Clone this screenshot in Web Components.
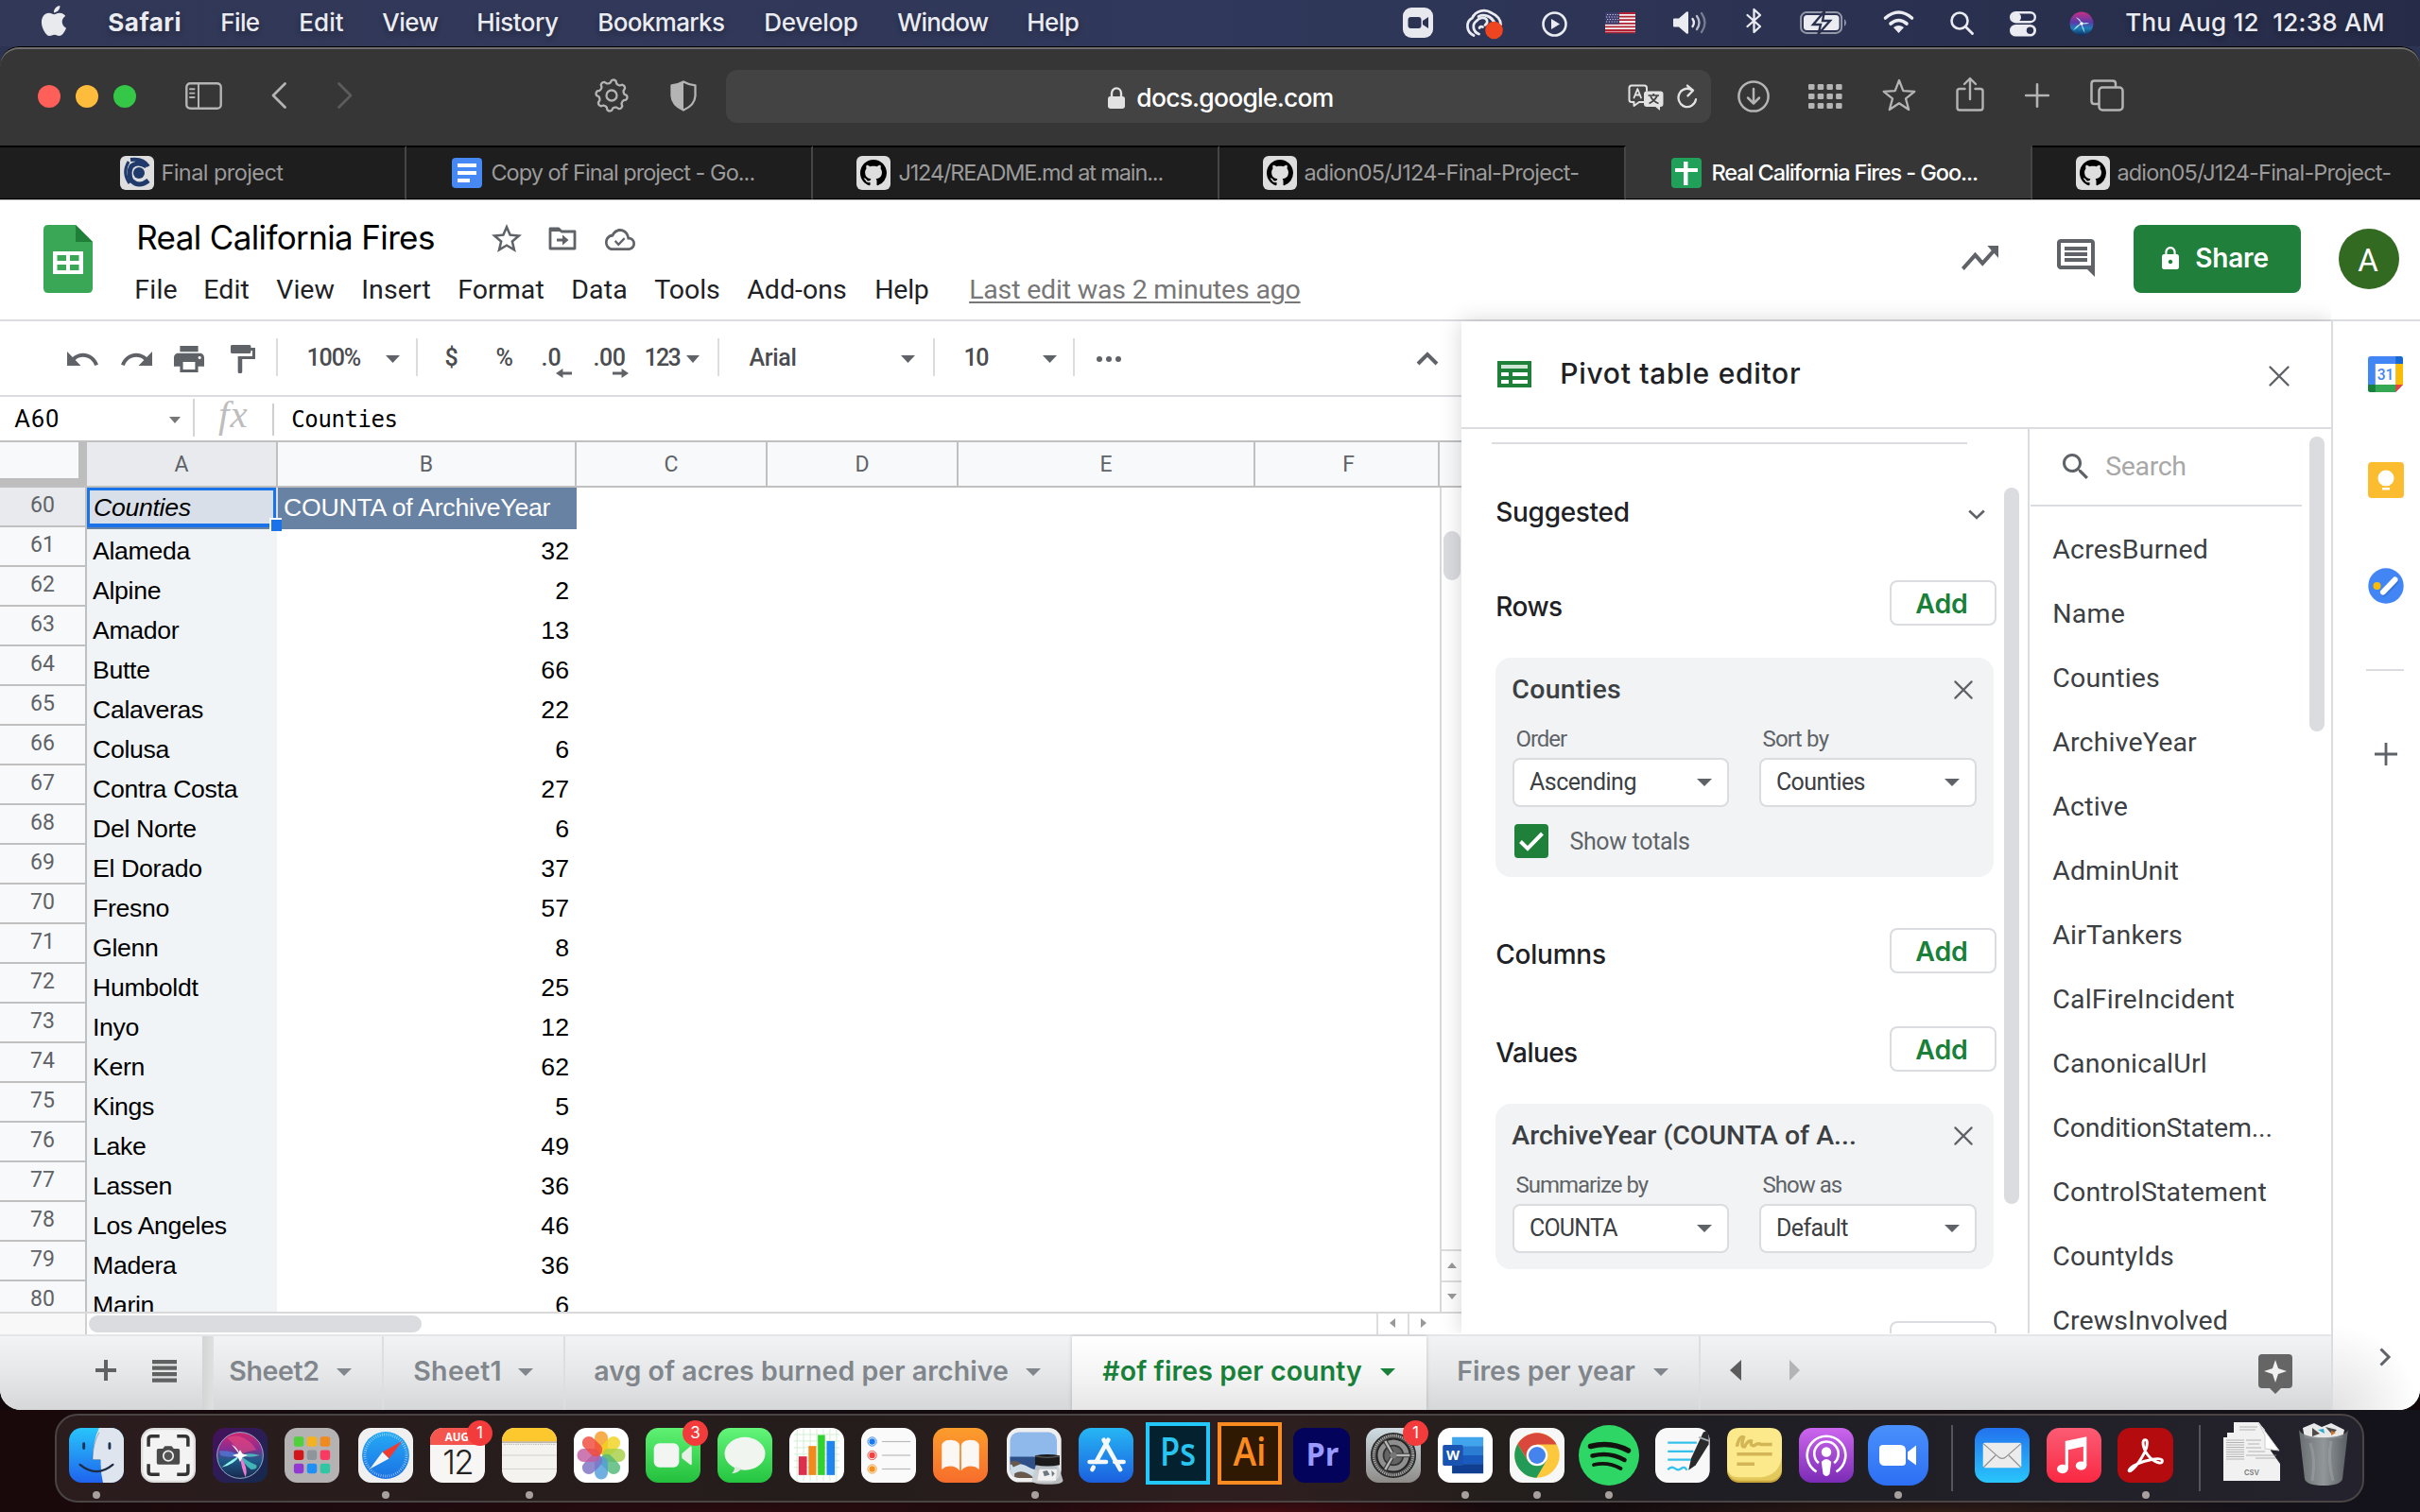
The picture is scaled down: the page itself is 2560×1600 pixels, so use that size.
<!DOCTYPE html>
<html lang="en">
<head>
<meta charset="utf-8">
<title>Real California Fires - Google Sheets</title>
<style>
html,body{margin:0;padding:0}
body{width:2560px;height:1600px;overflow:hidden;font-family:Roboto,"Liberation Sans",sans-serif;background:#0b0809}
</style>
</head>
<body>
<mac-desktop></mac-desktop>
<script>
/* ---------- helpers ---------- */
const FONTS={
  r:['Roboto,sans-serif',.3415],
  i:['Inter,sans-serif',.3635],
  a:['"Liberation Sans",sans-serif',.3465],
  m:['"DejaVu Sans Mono",monospace',.346],
  s:['"Liberation Serif",serif',.337]
};
const BASE=`*{box-sizing:border-box}:host{display:block}.row{display:flex;align-items:flex-start;overflow:visible}.row>*{flex:none}svg{display:block;overflow:visible}`;
// text item: left ink edge, baseline, ink width
const T=(x,y,w,text,size,o={})=>{
  const f=o.f||'r',[fam,k]=FONTS[f],lh=Math.round(size*1.25),p=size*.025;
  return{x:x-p,y:y-lh/2-k*size,w:w+size*.055,h:`<fit-text w="${(w+size*.055).toFixed(2)}" style="font:${o.st||''} ${o.wt||400} ${size}px/${lh}px ${fam.replace(/"/g,"'")};color:${o.c||'inherit'};${o.css||''}">${text}</fit-text>`};
};
const I=(x,y,w,h,name,c)=>({x,y,w,h:`<ui-icon name="${name}" style="width:${w}px;height:${h}px;color:${c||'inherit'}"></ui-icon>`});
const B=(x,y,w,h,css,inner='')=>({x,y,w,h:`<div style="width:${w}px;height:${h}px;${css}">${inner}</div>`});
function row(top,height,items,css='',left=0){
  let cur=left;
  return `<div class="row" style="height:${height}px;${css}">`+items.map(t=>{
    const m=t.x-cur;cur=t.x+t.w;
    return `<div style="width:${t.w}px;margin:${t.y-top}px 0 0 ${m}px">${t.h}</div>`;
  }).join('')+`</div>`;
}
function define(name,css,html){
  customElements.define(name,class extends HTMLElement{
    connectedCallback(){
      if(this.shadowRoot)return;
      const r=this.attachShadow({mode:'open'});
      r.innerHTML=`<style>${BASE}${css}</style>`+(typeof html==='function'?html(this):html);
    }
  });
}

/* ---------- fit-text: spreads letter spacing to fill a given width ---------- */
customElements.define('fit-text',class extends HTMLElement{
  connectedCallback(){
    if(this.shadowRoot)return;
    const r=this.attachShadow({mode:'open'});
    r.innerHTML=`<style>:host{display:block;white-space:pre}</style><span><slot></slot></span>`;
    const s=r.querySelector('span'),w=+this.getAttribute('w'),n=[...this.textContent].length;
    const nat=s.getBoundingClientRect().width;
    this.style.width=w+'px';
    if(n>1&&nat)s.style.letterSpacing=((w-nat)/(n-.5)).toFixed(3)+'px';
  }
});

/* ---------- icons ---------- */
const S=(d,w=2,x='')=>`<path d="${d}" fill="none" stroke="currentColor" stroke-width="${w}" stroke-linecap="round" stroke-linejoin="round" ${x}/>`;
const F=d=>`<path fill="currentColor" d="${d}"/>`;
const RR=(fill,x='')=>`<rect width="100" height="100" rx="23" fill="${fill}" ${x}/>`;
const LG=(id,a,b,c)=>`<linearGradient id="${id}" x1="0" y1="0" x2="0" y2="1"><stop offset="0" stop-color="${a}"/>${c?`<stop offset=".5" stop-color="${c}"/>`:''}<stop offset="1" stop-color="${b}"/></linearGradient>`;
const gear=(()=>{let d='';for(let i=0;i<64;i++){const a=i*Math.PI/32,p=i%8,r=(p<4)?16.6:13.2;const q=p===0||p===3?16:p===4||p===7?13.6:r;d+=(i?'L':'M')+(18+q*Math.cos(a)).toFixed(1)+' '+(18+q*Math.sin(a)).toFixed(1);}return d+'Z';})();
const ICONS={
 apple:['0 0 24 24',F('M12.152 6.896c-.948 0-2.415-1.078-3.96-1.04-2.04.027-3.91 1.183-4.961 3.014-2.117 3.675-.546 9.103 1.519 12.09 1.013 1.454 2.208 3.09 3.792 3.039 1.52-.065 2.09-.987 3.935-.987 1.831 0 2.35.987 3.96.948 1.637-.026 2.676-1.48 3.676-2.948 1.156-1.688 1.636-3.325 1.662-3.415-.039-.013-3.182-1.221-3.22-4.857-.026-3.04 2.48-4.494 2.597-4.559-1.429-2.09-3.623-2.324-4.39-2.376-2-.156-3.675 1.09-4.61 1.09zM15.53 3.83c.843-1.012 1.4-2.427 1.245-3.83-1.207.052-2.662.805-3.532 1.818-.78.896-1.454 2.338-1.273 3.714 1.338.104 2.715-.688 3.559-1.701')],
 zoomm:['0 0 32 32','<rect width="32" height="32" rx="9" fill="#e8e9ee"/><rect x="5.5" y="10" width="14" height="12" rx="3" fill="#2c3252"/><path d="M21 14l6-4v12l-6-4z" fill="#2c3252"/>'],
 cc:['0 0 40 32',S('M9 28.5C1 25 0 14 7.5 10C11 2 21 0 27.5 4.500C33 7 37.500 10 37.500 17',2.8)+S('M14.500 27C8 24.500 7 17 11.500 13.500C15 9.500 20 9 22 11C24.500 13.500 23 16 21 17.500',2.800)+S('M14 8.500C20 5.500 27 8 30.500 14M15 20.500Q16 18.500 18.500 19.500',2.800)+'<circle cx="30.500" cy="23" r="9.300" fill="#ee4420"/>'],
 playc:['0 0 27 27','<circle cx="13.5" cy="13.5" r="12" fill="none" stroke="currentColor" stroke-width="2.6"/>'+F('M10 8l9 5.5-9 5.5z')],
 flag:['0 0 32 22','<rect width="32" height="22" fill="#f4f4f4"/><path d="M0 1h32M0 4.6h32M0 8.2h32M0 11.8h32M0 15.4h32M0 19h32M0 21.4h32" stroke="#b22234" stroke-width="1.8"/><rect width="15" height="12.6" fill="#3c3b6e"/><path d="M2 2.5h12M1 5h13M2 7.5h12M1 10h13" stroke="#cfd0e4" stroke-width="1" stroke-dasharray="1.2 1.6"/>'],
 vol:['0 0 37 26',F('M1 8.5h5L14 1.6q2-1 2 1v20.8q0 2-2 1L6 17.500H1q-1 0-1-1v-7q0-1 1-1z')+S('M20.500 9q2.800 4 0 8',2.3)+S('M25 6q5 7 0 14',2.3,'opacity=".75"')+S('M30 3q7 10 0 20',2.3,'opacity=".4"')],
 bt:['0 0 18 28',S('M1.500 8L15 20L8.500 26V2L15 8L1.500 20',2.3)],
 batt:['0 0 51 24','<rect x="1.100" y="1.100" width="43" height="21.800" rx="6" fill="none" stroke="currentColor" stroke-width="2" opacity=".55"/><path d="M47 8q4 4 0 8z" fill="currentColor" opacity=".55"/><rect x="4" y="4" width="37.500" height="16" rx="3.500" fill="currentColor"/><path d="M26 0L14 14H22L19.500 24L32 10H24Z" fill="currentColor" stroke="#2a304e" stroke-width="2.4"/>'],
 wifi:['0 0 33 24',S('M2.500 8Q16.500 -4 30.500 8',3.6)+S('M8 14Q16.500 7 25 14',3.600)+F('M11 18q5.500-4 11 0L16.500 24z')],
 mag:['0 0 25 25','<circle cx="10" cy="10" r="8.500" fill="none" stroke="currentColor" stroke-width="2.600"/>'+S('M16.500 16.500L23.500 23.500',2.900)],
 cctl:['0 0 28 27','<rect x="1.200" y="1.200" width="25.600" height="10" rx="5" fill="none" stroke="currentColor" stroke-width="2.400"/><circle cx="7" cy="6.200" r="5" fill="currentColor"/><rect y="14" width="28" height="12.600" rx="6.300" fill="currentColor"/><circle cx="21.500" cy="20.300" r="3.700" fill="#2a304e"/>'],
 siri:['0 0 100 100','<defs><linearGradient id="g" x1="0" y1="0" x2="0" y2="1"><stop offset="0" stop-color="#c72f86"/><stop offset=".45" stop-color="#5a3aa8"/><stop offset=".7" stop-color="#1d7fb8"/><stop offset="1" stop-color="#102a5c"/></linearGradient></defs><circle cx="50" cy="50" r="48" fill="url(#g)"/><path d="M50 50Q38 34 26 24Q48 30 50 50Q66 44 82 48Q66 54 50 50Q60 70 64 88Q50 70 50 50Q34 66 16 78Q30 54 50 50" fill="#b5f6f7" opacity=".9"/><circle cx="50" cy="50" r="7" fill="#fff"/>'],
 side:['0 0 39 30','<rect x="1.300" y="1.300" width="36.400" height="27.400" rx="4" fill="none" stroke="currentColor" stroke-width="2.400"/>'+S('M14 1.500V28.500M5 7.500H9.500M5 12H9.500M5 16.500H9.500',2)],
 back:['0 0 16 28',S('M14.500 1.500L2 14L14.500 26.500',2.800)],
 fwd:['0 0 16 28',S('M1.500 1.500L14 14L1.500 26.500',2.800)],
 gear:['0 0 36 36',S(gear,2.3)+'<circle cx="18" cy="18" r="5.500" fill="none" stroke="currentColor" stroke-width="2.300"/>'],
 shield:['0 0 28 34',S('M14 1.500Q20 5 26.500 5.500V17Q26 27 14 32.500Q2 27 1.500 17V5.500Q8 5 14 1.500Z',2.3)+F('M14 1.500V32.500Q2 27 1.500 17V5.500Q8 5 14 1.500z')],
 lockm:['0 0 18 24','<rect y="10.500" width="18" height="13.500" rx="2.500" fill="currentColor"/>'+S('M4 11V7a5 5.500 0 0 1 10 0V11',2.400)],
 trans:['0 0 38 28',S('M17 19L12 19L6.500 23V19H4Q1.500 19 1.500 16.500V4Q1.500 1.500 4 1.500H17.500Q20 1.500 20 4V7',2)+S('M6.500 14.500L10.300 5L14 14.500M8 11.500H12.500',1.8)+'<rect x="17" y="7.500" width="20.500" height="16.500" rx="3" fill="currentColor"/><path d="M28 23h6v5z" fill="currentColor"/><path d="M21.500 12H33M27.300 10V12M31 12.500Q28 18 22.500 20.500M24 13Q27 18.500 32.500 20.500" fill="none" stroke="#434343" stroke-width="1.700"/>'],
 reload:['0 0 22 26',S('M16.500 6.500A9.300 9.300 0 1 0 20 15.500M11 1.500L17 6.500L11.500 12',2.3)],
 dl:['0 0 34 34','<circle cx="17" cy="17" r="15.600" fill="none" stroke="currentColor" stroke-width="2.500"/>'+S('M17 9V24M11 18.500L17 24.500L23 18.500',2.500)],
 grid:['0 0 36 26',[0,10,20].map(y=>[0,9.700,19.400,29.100].map(x=>`<rect x="${x}" y="${y}" width="6.500" height="6" rx="1.300" fill="currentColor"/>`).join('')).join('')],
 star5:['0 0 36 35',S('M18 2L22.300 13.200L34.300 13.800L25 21.400L28.200 33L18 26.300L7.800 33L11 21.400L1.700 13.800L13.700 13.200Z',2.300)],
 share:['0 0 30 37',S('M9.500 13H4Q1.500 13 1.500 15.500V33Q1.500 35.500 4 35.500H26Q28.500 35.500 28.500 33V15.500Q28.500 13 26 13H20.500M15 24V2M9 8L15 2L21 8',2.400)],
 plusm:['0 0 26 26',S('M13 1.200V24.800M1.200 13H24.800',2.600)],
 tabs:['0 0 36 34',S('M9 26H4.500Q1.500 26 1.500 23V4.500Q1.500 1.500 4.500 1.500H24Q27 1.500 27 4.500V8',2.500)+'<rect x="9.500" y="8.500" width="25" height="24" rx="3.500" fill="none" stroke="currentColor" stroke-width="2.500"/>'],
 gh:['0 0 36 36','<rect width="36" height="36" rx="6" fill="#dedede"/><g transform="translate(4 4) scale(1.750)"><path fill="#000" d="M8 0C3.580 0 0 3.580 0 8c0 3.540 2.290 6.530 5.470 7.590.4.07.55-.17.55-.38 0-.19-.01-.82-.01-1.490-2.010.37-2.530-.49-2.690-.94-.09-.23-.48-.94-.82-1.130-.28-.15-.68-.52-.01-.53.63-.01 1.080.58 1.230.82.72 1.210 1.870.87 2.330.66.07-.52.28-.87.51-1.070-1.780-.2-3.640-.89-3.640-3.950 0-.87.31-1.590.82-2.150-.08-.2-.36-1.020.08-2.120 0 0 .67-.21 2.200.82.64-.18 1.320-.27 2-.27s1.360.09 2 .27c1.530-1.040 2.200-.82 2.200-.82.44 1.100.16 1.920.08 2.120.51.56.82 1.270.82 2.150 0 3.070-1.870 3.750-3.650 3.950.29.25.54.73.54 1.480 0 1.070-.01 1.930-.01 2.200 0 .21.15.46.55.38A8.010 8.010 0 0016 8c0-4.420-3.580-8-8-8z"/></g>'],
 bc:['0 0 36 36','<rect width="36" height="36" rx="6" fill="#dedede"/><g fill="none" stroke="#1f3a6b" stroke-width="5"><path d="M9 6Q2 18 10 29" stroke-width="3"/><path d="M11 4Q24 2 30 11" stroke-width="4"/><path d="M28 11Q19 5 12 11Q8 18 12 26Q20 34 30 26"/></g><circle cx="20" cy="18" r="6" fill="#1f3a6b"/>'],
 gdoc:['0 0 32 32','<rect width="32" height="32" rx="4" fill="#4688f4"/><path d="M6 6h20v4H6zM6 14h20v4H6zM6 22h13v4H6z" fill="#fff"/>'],
 gsht:['0 0 32 32','<rect width="32" height="32" rx="4" fill="#21a05a"/><path d="M13 4h4.500v7H28v4H17.500v14H13V15H4v-4h9z" fill="#fff"/>'],
 sheets:['0 0 52 72','<path d="M5 0H34L52 18V67Q52 72 47 72H5Q0 72 0 67V5Q0 0 5 0Z" fill="#3aa757"/><path d="M34 0L52 18H34Z" fill="#1f7e38"/><path fill="#fff" fill-rule="evenodd" d="M10 28H42V52H10ZM14.500 32V38H24V32ZM28 32V38H37.500V32ZM14.500 42V48H24V42ZM28 42V48H37.500V42Z"/>'],
 star:['2 2 20 19',F('M22 9.240l-7.190-.62L12 2 9.190 8.630 2 9.240l5.460 4.730L5.820 21 12 17.270 18.180 21l-1.630-7.030L22 9.240zM12 15.400l-3.760 2.270 1-4.280-3.320-2.880 4.380-.38L12 6.100l1.710 4.040 4.380.38-3.320 2.880 1 4.280L12 15.400z')],
 fold:['0 0 30 25','<path d="M2 2H11L14 5H28V23H2Z" fill="none" stroke="currentColor" stroke-width="2.800" stroke-linejoin="round"/><path d="M2 1H11L14 5H2z" fill="currentColor"/>'+F('M9 12.500h6V8.500l6.500 5.500-6.500 5.500v-4H9z')],
 cloud:['0 4 24 16',F('M19.350 10.040C18.670 6.590 15.640 4 12 4 9.110 4 6.600 5.640 5.350 8.040 2.340 8.360 0 10.910 0 14c0 3.310 2.690 6 6 6h13c2.760 0 5-2.240 5-5 0-2.640-2.050-4.780-4.650-4.960zM19 18H6c-2.210 0-4-1.790-4-4 0-2.050 1.530-3.760 3.560-3.970l1.070-.11.5-.95C8.080 7.140 9.940 6 12 6c2.620 0 4.880 1.860 5.390 4.430l.3 1.500 1.530.11c1.560.1 2.780 1.410 2.780 2.960 0 1.650-1.350 3-3 3z')+'<path d="M8 13l2.700 2.700L15.500 11" fill="none" stroke="currentColor" stroke-width="1.700"/>'],
 trend:['2 6 20 12',F('M16 6l2.290 2.290-4.880 4.880-4-4L2 16.590 3.410 18l6-6 4 4 6.300-6.290L22 12V6z')],
 comm:['2 2 20 20',F('M21.990 4c0-1.100-.89-2-1.990-2H4c-1.100 0-2 .9-2 2v12c0 1.100.9 2 2 2h14l4 4-.01-18zM20 4v12H4V4h16zM6 12h12v2H6zm0-3h12v2H6zm0-3h12v2H6z')],
 lock:['4 1 16 21',F('M18 8h-1V6c0-2.760-2.240-5-5-5S7 3.240 7 6v2H6c-1.100 0-2 .9-2 2v10c0 1.100.9 2 2 2h12c1.100 0 2-.9 2-2V10c0-1.100-.9-2-2-2zm-6 9c-1.100 0-2-.9-2-2s.9-2 2-2 2 .9 2 2-.9 2-2 2zm3.100-9H8.900V6c0-1.710 1.390-3.100 3.100-3.100 1.710 0 3.100 1.390 3.100 3.100v2z')],
 undo:['2 7 20.500 9',F('M12.500 8c-2.650 0-5.050.99-6.900 2.600L2 7v9h9l-3.620-3.620c1.390-1.160 3.160-1.880 5.120-1.880 3.540 0 6.550 2.310 7.600 5.500l2.370-.78C21.080 11.030 17.150 8 12.500 8z')],
 redo:['1.500 7 20.500 9',F('M18.400 10.600C16.550 8.990 14.150 8 11.500 8c-4.650 0-8.580 3.030-9.960 7.220L3.900 16c1.050-3.190 4.050-5.500 7.600-5.500 1.950 0 3.730.72 5.120 1.880L13 16h9V7l-3.600 3.600z')],
 print:['2 3 20 18',F('M19 8H5c-1.660 0-3 1.340-3 3v6h4v4h12v-4h4v-6c0-1.660-1.340-3-3-3zm-3 11H8v-5h8v5zm3-7c-.55 0-1-.45-1-1s.45-1 1-1 1 .45 1 1-.45 1-1 1zm-1-9H6v4h12V3z')],
 paint:['4 2 17 20',F('M18 4V3c0-.55-.45-1-1-1H5c-.55 0-1 .45-1 1v4c0 .55.45 1 1 1h12c.55 0 1-.45 1-1V6h1v4H9v11c0 .55.45 1 1 1h1c.55 0 1-.45 1-1v-9h9V4h-3z')],
 dn:['0 0 16 8',F('M0 0h16L8 8z')],
 lf:['0 0 8 16',F('M8 0v16L0 8z')],
 rt:['0 0 8 16',F('M0 0v16L8 8z')],
 up:['0 0 16 8',F('M0 8h16L8 0z')],
 al:['0 0 16 10',F('M0 5L7 0V3.500H16V6.500H7V10z')],
 ar:['0 0 16 10',F('M16 5L9 0V3.500H0V6.500H9V10z')],
 dots:['0 0 26 6','<circle cx="3" cy="3" r="3" fill="currentColor"/><circle cx="13" cy="3" r="3" fill="currentColor"/><circle cx="23" cy="3" r="3" fill="currentColor"/>'],
 chu:['0 0 24 15','<path d="M2 13L12 3L22 13" fill="none" stroke="currentColor" stroke-width="4"/>'],
 chd:['0 0 18 11','<path d="M1.200 1.500L9 9L16.800 1.500" fill="none" stroke="currentColor" stroke-width="2.600"/>'],
 chr:['0 0 12 20','<path d="M1.500 1.500L10 10L1.500 18.500" fill="none" stroke="currentColor" stroke-width="3"/>'],
 piv:['0 0 36 28','<rect width="36" height="28" fill="#1e8039"/><path d="M4 4h28v4H4z" fill="#cfe6d5"/><path d="M4 12h8v4H4zM16 12h16v4H16zM4 20h8v4H4zM16 20h16v4H16z" fill="#fff"/>'],
 x:['0 0 22 22',S('M1.500 1.500L20.500 20.500M20.500 1.500L1.500 20.500',2.400)],
 search:['3 3 17.500 17.500',F('M15.500 14h-.79l-.28-.27C15.410 12.590 16 11.110 16 9.500 16 5.910 13.090 3 9.500 3S3 5.910 3 9.500 5.910 16 9.500 16c1.610 0 3.090-.59 4.230-1.570l.27.28v.79l5 4.990L20.490 19l-4.990-5zm-6 0C7.010 14 5 11.990 5 9.500S7.010 5 9.500 5 14 7.010 14 9.500 11.990 14 9.500 14z')],
 check:['0 0 36 36','<rect width="36" height="36" rx="4" fill="#1e8039"/><path d="M6.500 18.500L14 26L29.500 10" fill="none" stroke="#fff" stroke-width="4"/>'],
 list:['0 0 26 24',F('M0 0h26v4.300H0zM0 6.500h26v4.300H0zM0 13h26v4.300H0zM0 19.500h26v4.300H0z')],
 plus:['0 0 22 22','<path d="M11 0V22M0 11H22" stroke="currentColor" stroke-width="4"/>'],
 plust:['0 0 24 24','<path d="M12 0V24M0 12H24" stroke="currentColor" stroke-width="2.800"/>'],
 expl:['0 0 36 42','<path d="M4 0H32Q36 0 36 4V32Q36 36 32 36H24L18 42L12 36H4Q0 36 0 32V4Q0 0 4 0Z" fill="#656565"/><path d="M18 6L21 15L30 18L21 21L18 30L15 21L6 18L15 15Z" fill="#f1f1f1"/>'],
 cal:['0 0 38 38','<rect width="38" height="38" rx="3" fill="#4285f4"/><path d="M30 0h5q3 0 3 3v5h-8z" fill="#1967d2"/><path d="M30 8h8v22h-8z" fill="#fbbc04"/><path d="M8 30h22v8H8z" fill="#34a853"/><path d="M0 30h8v8H3q-3 0-3-3z" fill="#188038"/><path d="M38 30v8H30z" fill="#fff"/><path d="M30 38V30h8z" fill="#ea4335"/><path d="M8 8h22v22H8z" fill="#fff"/><text x="19" y="25" font-family="Roboto" font-weight="500" font-size="16" text-anchor="middle" fill="#4285f4">31</text>'],
 keep:['0 0 38 38','<rect width="38" height="38" rx="4" fill="#fbbc30"/><circle cx="19" cy="17" r="8.500" fill="#fff"/><path d="M15 20h8v5h-8zM15 27h8v2.500h-8z" fill="#fff"/>'],
 task:['0 0 38 38','<circle cx="19" cy="19" r="18.700" fill="#4285f4"/><circle cx="9.500" cy="19" r="4" fill="#fbbc04"/><path d="M16 25.500L28.500 12.500" stroke="#2a5db8" stroke-width="6" stroke-linecap="round" opacity=".35" transform="translate(1 2)"/><path d="M16 25.500L28.500 12.500" stroke="#fff" stroke-width="6" stroke-linecap="round"/>'],
 /* dock */
 finder:['0 0 100 100','<defs>'+LG('g','#28c5fb','#1f63ee')+'<clipPath id="c"><rect width="100" height="100" rx="23"/></clipPath></defs><g clip-path="url(#c)"><rect width="100" height="100" fill="url(#g)"/><path d="M55 0Q43 25 43 58H58Q57 80 62 100H100V0Z" fill="#dfe5ee"/></g><path d="M27 29V37M74 29V37" stroke="#1c3352" stroke-width="5" stroke-linecap="round"/><path d="M20 67Q50 92 80 67" fill="none" stroke="#1c2c44" stroke-width="4" stroke-linecap="round"/><path d="M55 8Q43 30 43 58H57" fill="none" stroke="#1c3352" stroke-width="1.500" opacity=".4"/>'],
 shot:['0 0 100 100',RR('#dcdcdc')+'<rect x="4" y="4" width="92" height="92" rx="19" fill="#f3f3f3"/><g fill="none" stroke="#333" stroke-width="6"><path d="M14 34V20Q14 15 20 15H34M66 15H80Q86 15 86 20V34M86 66V80Q86 85 80 85H66M34 85H20Q14 85 14 80V66"/></g><path d="M32 38H40L44 33H56L60 38H68Q71 38 71 41V64Q71 67 68 67H32Q29 67 29 64V41Q29 38 32 38Z" fill="#4a4a4a"/><circle cx="50" cy="51" r="9" fill="#555" stroke="#eee" stroke-width="3"/>'],
 siriapp:['0 0 100 100','<defs><linearGradient id="b" x1="0" y1="0" x2="1" y2="1"><stop offset="0" stop-color="#46105c"/><stop offset="1" stop-color="#122b4e"/></linearGradient><linearGradient id="g" x1="0" y1="0" x2="0" y2="1"><stop offset="0" stop-color="#d0286e"/><stop offset=".35" stop-color="#8a2c93"/><stop offset=".6" stop-color="#1e5a88"/><stop offset="1" stop-color="#19284e"/></linearGradient></defs>'+RR('url(#b)')+'<circle cx="50" cy="50" r="42" fill="url(#g)" stroke="#9ab6d2" stroke-width="1.600"/><path d="M50 48Q34 24 26 18Q58 6 80 40Q66 42 50 48Z" fill="#ea4a80" opacity=".6"/><path d="M12 42Q32 40 50 50Q30 56 14 50Z" fill="#4d7fe0" opacity=".7"/><path d="M50 50Q38 56 16 72Q38 68 50 50" fill="#8ff5ea"/><path d="M50 50Q66 44 86 50Q66 56 50 50Q64 62 80 68Q82 76 70 76Q56 66 50 50" fill="#4fd8cc" opacity=".75"/><path d="M50 50Q52 74 60 90Q66 74 50 50" fill="#f07ad0"/><path d="M50 50Q40 36 34 30Q46 36 50 50" fill="#fff"/><path d="M50 40L54 47L64 50L54 54L50 62L46 54L36 50L46 47Z" fill="#fff"/>'],
 lpad:['0 0 100 100',RR('#b4b2b3')+['#4fd13b','#f4b21e','#f18a1e','#d3151c','#8f969b','#fb3a62','#9238d3','#1d8ff5','#2fc6a3'].map((c,i)=>`<rect x="${17+(i%3)*24}" y="${16+Math.floor(i/3)*24.500}" width="18" height="18" rx="4" fill="${c}"/>`).join('')],
 safari:['0 0 100 100','<defs>'+LG('g','#25aaf5','#1b72e4')+'</defs>'+RR('#f0f0f0')+'<circle cx="50" cy="50" r="43" fill="url(#g)"/><circle cx="50" cy="50" r="38" fill="none" stroke="#e5f3ff" stroke-width="5" stroke-dasharray="1 2.980" opacity=".8"/><path d="M80 24L44 44L56 56Z" fill="#f03c30"/><path d="M21 75L44 44L56 56Z" fill="#f4f4f4"/>'],
 cale:['0 0 100 100','<defs><clipPath id="c"><rect width="100" height="100" rx="23"/></clipPath></defs><g clip-path="url(#c)"><rect width="100" height="100" fill="#f7f6f4"/><rect width="100" height="31" fill="#f4554d"/></g><text x="49" y="23.500" font-family="Open Sans" font-weight="700" font-size="20" text-anchor="middle" fill="#fff">AUG</text><text x="50" y="84" font-family="Inter" font-weight="300" font-size="60" letter-spacing="-3" text-anchor="middle" fill="#222">12</text>'],
 notes:['0 0 100 100','<defs><clipPath id="c"><rect width="100" height="100" rx="23"/></clipPath></defs><g clip-path="url(#c)"><rect width="100" height="100" fill="#f5f3f0"/><rect width="100" height="25" fill="#fdc72e"/></g><path d="M0 26H100" stroke="#a9a19a" stroke-width="2"/><path d="M3 30H98" stroke="#999" stroke-width="2" stroke-dasharray="1 2"/><path d="M0 50H100M0 75H100" stroke="#d0cdca" stroke-width="1.500"/>'],
 photos:['0 0 100 100',RR('#fff')+['#f59b23','#f0d31f','#a5cf45','#54b878','#4f9edb','#7d72c4','#c15da0','#f04a3a'].map((c,i)=>`<rect x="38" y="6" width="24" height="42" rx="12" fill="${c}" opacity=".82" transform="rotate(${i*45} 50 50)"/>`).join('')],
 ftime:['0 0 100 100','<defs>'+LG('g','#5ff173','#23c03c')+'</defs>'+RR('url(#g)')+'<rect x="15" y="28" width="46" height="44" rx="10" fill="#f2f5f2"/><path d="M66 47L81 34Q84 32 84 36V66Q84 69 81 67L66 55Z" fill="#e7efe7"/>'],
 msgs:['0 0 100 100','<defs>'+LG('g','#63f57a','#24c440')+'</defs>'+RR('url(#g)')+'<ellipse cx="50" cy="47" rx="37" ry="30" fill="#f0f5f0"/><path d="M31 70Q32 78 26 83Q38 82 44 74Z" fill="#dfe9df"/>'],
 nums:['0 0 100 100',RR('#fff')+'<path d="M8 12H92M8 24H92M8 36H92M8 48H92M8 60H92M8 72H92M14 2V98M26 2V98M38 2V98M50 2V98M62 2V98M74 2V98M86 2V98" stroke="#cdeccd" stroke-width="1.500"/><path d="M17 52h15v34H17z" fill="#dd2f4c"/><path d="M35 33h14v53H35z" fill="#f08a1d"/><path d="M52 13h13v73H52z" fill="#2fd32f"/><path d="M68 24h15v62H68z" fill="#1f86ef"/>'],
 rem:['0 0 100 100',RR('#fbfafa')+[['#1a78f2',25],['#f2413e',50],['#f5921e',75]].map(([c,y])=>`<circle cx="20" cy="${y}" r="8" fill="none" stroke="${c}" stroke-width="1.500"/><circle cx="20" cy="${y}" r="5.500" fill="${c}"/><path d="M38 ${y}H90" stroke="#b9b9bd" stroke-width="2"/>`).join('')],
 books:['0 0 100 100','<defs>'+LG('g','#fc9d2c','#f76d2c')+'</defs>'+RR('url(#g)')+'<path d="M16 31Q18 22 33 22Q47 23 48.500 32V78Q42 70 32 70Q22 70 16 76Z" fill="#fbf7f3"/><path d="M84 31Q82 22 67 22Q53 23 51.500 32V78Q58 70 68 70Q78 70 84 76Z" fill="#fbf7f3"/>'],
 prev:['0 0 104 106','<rect width="100" height="100" rx="23" fill="#efefef"/><defs><clipPath id="c"><rect x="6" y="8" width="86" height="84" rx="16"/></clipPath></defs><g clip-path="url(#c)"><rect width="100" height="60" fill="#8fb9ea"/><rect y="53" width="100" height="50" fill="#2d5188"/><path d="M0 70Q20 60 40 72T100 76V100H0Z" fill="#cfdde8"/><path d="M6 62Q20 58 26 66L12 72M14 84Q30 74 50 92H14" fill="#69584c"/></g><path d="M54 66L46 96Q46 104 76 104Q104 104 103 96L94 66Z" fill="#c9cdd0" opacity=".9"/><path d="M60 76L56 97H90L92 76" fill="#f1f1f1"/><path d="M66 80l8-2 5 8-10 3zM82 78l6 6-5 6" fill="#6d7880"/><path d="M52 51Q74 46 97 51V68Q74 73 52 68Z" fill="#1b1b1b"/><path d="M52 52Q74 57 97 52" fill="none" stroke="#5a5a5a" stroke-width="2"/>'],
 appst:['0 0 100 100','<defs>'+LG('g','#26b7f4','#1b5fdf')+'</defs>'+RR('url(#g)')+'<g stroke="#f6f9fc" stroke-width="8" stroke-linecap="round"><path d="M54 22L32 62M27 72L25 76M46 22L76 76M20 62H50M66 62H82"/></g>'],
 ps:['0 0 68 66','<rect x="2" y="2" width="64" height="62" fill="#03212e" stroke="#22c8f9" stroke-width="4"/><text x="34" y="46" font-family="Open Sans" font-weight="600" font-size="42" text-anchor="middle" textLength="38" lengthAdjust="spacingAndGlyphs" fill="#27c5ef">Ps</text>'],
 ai:['0 0 68 66','<rect x="2" y="2" width="64" height="62" fill="#301903" stroke="#fb8b20" stroke-width="4"/><text x="34" y="46" font-family="Open Sans" font-weight="600" font-size="42" text-anchor="middle" textLength="35" lengthAdjust="spacingAndGlyphs" fill="#fb8b20">Ai</text>'],
 pr:['0 0 60 58','<rect width="60" height="58" rx="12" fill="#03035c"/><text x="31" y="40" font-family="Open Sans" font-weight="700" font-size="34" text-anchor="middle" textLength="35" lengthAdjust="spacingAndGlyphs" fill="#9999ff">Pr</text>'],
 prefs:['0 0 100 100','<defs>'+LG('g','#cfdde3','#8d8b88')+'</defs>'+RR('url(#g)')+'<circle cx="50" cy="50" r="40" fill="#4a4a4a" stroke="#2b2b2b" stroke-width="3"/><circle cx="50" cy="50" r="36" fill="none" stroke="#a8a8a8" stroke-width="5" stroke-dasharray="2 1.770"/><circle cx="50" cy="50" r="30" fill="#8f8f8f" stroke="#222" stroke-width="3"/><circle cx="50" cy="50" r="18" fill="#646464" stroke="#333" stroke-width="3"/><path d="M50 50L80 50M50 50L35 24M50 50L35 76" stroke="#3a3a3a" stroke-width="8"/><path d="M50 50L80 50M50 50L35 24M50 50L35 76" stroke="#b9b9b9" stroke-width="4"/><circle cx="50" cy="50" r="6" fill="#777"/>'],
 word:['0 0 100 100',RR('#fff')+'<path d="M26 17h57v17H26z" fill="#41a5ee"/><path d="M26 33h57v17H26z" fill="#2b7cd3"/><path d="M26 50h57v17H26z" fill="#185abd"/><path d="M26 66h57v17H26z" fill="#103f91"/><rect x="9" y="31" width="37" height="38" rx="3" fill="#1a53b0"/><text x="27.500" y="59" font-family="Open Sans" font-weight="700" font-size="25" text-anchor="middle" fill="#fff">W</text>'],
 chrome:['0 0 100 100',RR('#f7f7f7')+'<circle cx="50" cy="50" r="41" fill="#fdc83c"/><path d="M14.500 29.500A41 41 0 0 1 85.500 30L50 30L33 60Z" fill="#d9483b"/><path d="M14.500 29.500A41 41 0 0 0 49 91L67 60L33 60Z" fill="#239a56"/><circle cx="50" cy="50" r="19.500" fill="#fff"/><circle cx="50" cy="50" r="15.500" fill="#4583ee"/>'],
 spot:['0 0 64 64','<circle cx="32" cy="32" r="32" fill="#2ed765"/><g fill="none" stroke="#14120f" stroke-linecap="round"><path d="M12.500 22.500Q34 17 52.500 27" stroke-width="5.500"/><path d="M14.500 32.500Q33 28 48.500 37" stroke-width="4.500"/><path d="M16 42Q31 38.500 44.500 46" stroke-width="3.800"/></g>'],
 tedit:['0 0 104 100',RR('#f8f8f8')+'<path d="M23 27H76M23 43H70M23 58H66" stroke="#35c1ec" stroke-width="4"/><path d="M23 76Q30 69 36 74T48 74T58 77" fill="none" stroke="#35c1ec" stroke-width="4"/><path d="M61 77L66 55L88 8Q100 0 98 30L74 68Z" fill="#2a2a2c"/><path d="M80 17L99 24" stroke="#a9adb0" stroke-width="3"/>'],
 stick:['0 0 100 100','<rect y="6" width="100" height="94" rx="22" fill="#c9a63c"/><rect y="3" width="100" height="93" rx="22" fill="#e3c85c"/><path d="M22 0H78Q100 0 100 22V52Q96 86 62 90H22Q0 90 0 68V22Q0 0 22 0Z" fill="#fbe98b"/><path d="M18 34Q22 14 30 17Q24 36 32 34Q38 22 44 24Q42 34 50 32Q56 27 62 30H82M18 48H82M18 66H50" fill="none" stroke="#d3b556" stroke-width="6"/>'],
 pod:['0 0 100 100','<defs>'+LG('g','#cd66ee','#7a2bb5')+'</defs>'+RR('url(#g)')+'<g fill="none" stroke="#fff" stroke-width="4.500"><path d="M32 80A35 35 0 1 1 68 80"/><path d="M36 64A22 22 0 1 1 64 64"/></g><circle cx="50" cy="44" r="9" fill="#fff"/><path d="M41 62Q50 52 59 62L56 84Q50 92 44 84Z" fill="#fff"/>'],
 zoom:['0 0 64 64','<defs>'+LG('g','#4a90fb','#2c6ff4')+'</defs><rect width="64" height="64" rx="20" fill="url(#g)"/><path d="M12 24.500Q12 21 16 21H34Q40 21 40 27V39.500Q40 43 36 43H18Q12 43 12 37Z" fill="#fff"/><path d="M42 28.500L51 21.500V42.500L42 36Z" fill="#fff"/>'],
 mail:['0 0 100 100','<defs>'+LG('g','#2272ee','#29c6fb')+'</defs>'+RR('url(#g)')+'<rect x="15" y="27" width="70" height="46" rx="3" fill="#ececec"/><path d="M16 29L42 52Q50 60 58 52L84 29M16 72L38 50M84 72L62 50" fill="none" stroke="#8f8f8f" stroke-width="2"/>'],
 music:['0 0 100 100','<defs>'+LG('g','#fb5c74','#fa2842')+'</defs>'+RR('url(#g)')+'<ellipse cx="29" cy="75" rx="10" ry="8" fill="#fff"/><ellipse cx="63" cy="69" rx="10" ry="8" fill="#fff"/><path d="M34 75V24L73 16V69H67V34L39.500 40V75Z" fill="#fff"/>'],
 acro:['0 0 100 100',RR('#b30b0e')+'<path d="M50 22C43 20 44 40 60 56C72 66 82 66 80 59C77 53 52 58 35 66C19 73 18 82 24 78C36 70 54 40 53 27Q53 22 50 22Z" fill="none" stroke="#fff" stroke-width="5"/>'],
 csv:['0 0 60 62','<path d="M11 0H37L44 8V22H50V30L60 44V62H0V16H4V11H11Z" fill="#f1f1f1"/><path d="M37 0L44 14V28L59 30Z" fill="#fff" stroke="#ccc"/><g stroke="#9a9a9a" stroke-width="1"><path d="M3 19H22M3 21.500H22M3 24H22M3 26.500H22M3 29H22M3 31.500H22M3 34H22M3 36.500H22M3 39H22M24 19H40M26 23H38M24 27H40M26 31H44M24 35H56M34 38H56M17 5H36M17 8H34" opacity=".7"/></g><text x="30" y="56" font-family="Inter" font-weight="600" font-size="7.500" text-anchor="middle" fill="#777">CSV</text>'],
 trash:['0 0 52 67','<defs><linearGradient id="g"><stop offset="0" stop-color="#6e7476"/><stop offset=".5" stop-color="#9aa0a2"/><stop offset="1" stop-color="#5b6164"/></linearGradient></defs><path d="M4 6L16 1L24 5L34 1L48 8L46 17H6Z" fill="#e9e9e9"/><path d="M14 6l8 6-8 3zM28 5l7 8 5-5z" fill="#504a48"/><path d="M20 8l6-1 1 5z" fill="#2ba8d0"/><path d="M34 9l5 2-5 3z" fill="#c9772b"/><path d="M0 8Q4 16 26 16Q48 16 52 8L46 60Q44 67 26 67Q8 67 6 60Z" fill="url(#g)" opacity=".93"/><path d="M12 22Q18 40 14 62M34 20Q30 40 36 62" stroke="#c4c9ca" stroke-width="3" opacity=".25" fill="none"/>']
};
customElements.define('ui-icon',class extends HTMLElement{
  connectedCallback(){
    if(this.shadowRoot)return;
    const [vb,b]=ICONS[this.getAttribute('name')];
    this.attachShadow({mode:'open'}).innerHTML=`<style>:host{display:block}svg{display:block;width:100%;height:100%;overflow:visible}</style><svg viewBox="${vb}" preserveAspectRatio="none">${b}</svg>`;
  }
});

/* ---------- macOS menu bar ---------- */
const mi=(x,w,t,wt=500)=>T(x,33,w,t,26,{f:'i',wt});
define('mac-menubar',`:host{height:49px;background:linear-gradient(90deg,#323857,#30385b 50%,#262c48);color:#ebecf1;text-shadow:0 3px 6px #0005}`,
 row(0,49,[I(41,6,32,32,'apple','#e9eaee'),mi(115,76,'Safari',700),mi(234,40,'File'),mi(317,46,'Edit'),mi(405,58,'View'),mi(505,85,'History'),mi(633,133,'Bookmarks'),mi(809,98,'Develop'),mi(950,95,'Window'),mi(1087,54,'Help'),
 I(1484,8,32,32,'zoomm'),I(1550,9,40,32,'cc'),I(1631,12,27,27,'playc'),I(1698,13,32,22,'flag'),I(1770,11,37,26,'vol'),I(1847,8,18,28,'bt'),I(1904,12,51,24,'batt'),I(1992,11,33,24,'wifi'),I(2063,12,25,25,'mag'),I(2126,12,28,27,'cctl'),I(2189,12,26,26,'siri'),mi(2249,273,'Thu Aug 12  12:38 AM')]));

/* ---------- Safari chrome ---------- */
const dot=(x,c)=>B(x,90,24,24,`border-radius:50%;background:${c}`);
define('safari-toolbar',`:host{height:105px;background:#363636;border-top:1px solid #000;border-radius:20px 20px 0 0;color:#b4b4b4;box-shadow:inset 0 2px 0 #6f6f6f}`,
 row(50,104,[dot(40,'#fe5f58'),dot(80,'#febc3c'),dot(120,'#34c748'),I(196,87,39,29,'side'),I(287,87,16,28,'back'),I(357,87,16,28,'fwd','#5c5c5c'),I(629,83,36,36,'gear'),I(709,85,28,33,'shield'),
 B(768,74,1042,56,'border-radius:12px;background:#434343;color:#e2e2e2',row(74,56,[I(1172,92,18,23,'lockm'),T(1203,113.5,207,'docs.google.com',26.5,{f:'i',wt:500,c:'#fff'}),I(1722,89,38,28,'trans'),I(1774,89,22,27,'reload')],'',768)),
 I(1838,85,34,34,'dl'),I(1913,89,36,26,'grid'),I(1991,83,36,35,'star5'),I(2069,81,30,37,'share'),I(2142,88,26,26,'plusm'),I(2211,84,36,34,'tabs')]));
const TABS=[[0,430,'bc',127,'Final project',171,128],[430,430,'gdoc',478,'Copy of Final project - Go...',520,278],[860,430,'gh',906,'J124/README.md at main...',951,279],[1290,430,'gh',1336,'adion05/J124-Final-Project-',1380,290],[1720,430,'gsht',1768,'Real California Fires - Goo...',1811,281],[2150,410,'gh',2196,'adion05/J124-Final-Project-',2240,289]];
define('safari-tabs',`:host{height:57px;display:flex}.t{flex:none;background:#1e1e1e;color:#9b9b9b;border-top:2px solid #000;border-bottom:1px solid #000;border-right:2px solid #464646;height:57px}.t.on{background:#363636;color:#fff;border-top-color:#363636}.t:last-child{border-right:0}`,
 TABS.map(([x,w,ic,ix,t,tx,tw],i)=>{const s=ic[0]==='g'&&ic!=='gh'?32:36;return `<div class="t ${i===4?'on':''}" style="width:${w}px">${row(156,50,[I(ix,183-s/2,s,s,ic),T(tx,191.5,tw,t,23.5,{f:'i',wt:i===4?500:400})],'',x)}</div>`}).join(''));

/* ---------- Sheets header ---------- */
const hm=(x,w,t)=>T(x,316.5,w,t,28.5);
define('sheets-header',`:host{height:129px;background:#fff;border-bottom:2px solid #dadce0;border-top:1px solid #bbb;color:#202124;display:flex}.l{width:2050px}.c{color:#5f6368}`,
 `<div class="l">`+row(212,71,[{...I(46,238,52,72,'sheets')},T(145,264,314,'Real California Fires',35,{f:'i',c:'#000'}),I(520,237,32,30,'star','#5f6368'),I(580,240,30,25,'fold','#5f6368'),I(640,242,32,23,'cloud','#5f6368')])
 +row(283,54,[hm(143,44,'File'),hm(216,47,'Edit'),hm(293,60,'View'),hm(383,72,'Insert'),hm(485,90,'Format'),hm(605,58,'Data'),hm(693,68,'Tools'),hm(791,104,'Add-ons'),hm(926,56,'Help'),T(1026,316.5,349,'Last edit was 2 minutes ago',28.5,{c:'#777',css:'text-decoration:underline;text-underline-offset:3px;text-decoration-thickness:2px'})])
 +`</div>`+row(212,125,[I(2075,260,39,26,'trend','#5f6368'),I(2176,253,40,40,'comm','#5f6368'),
 B(2257,238,177,72,'border-radius:8px;background:#20803b;color:#fff',row(238,72,[I(2287,261,18,24,'lock'),T(2323,284,76,'Share',28,{wt:600,f:'i'})],'',2257)),
 B(2474,242,64,64,'border-radius:50%;background:#336a22;color:#fff',row(242,64,[T(2495,287,22,'A',33)],'',2474))],'',2050));

/* ---------- toolbar, formula bar ---------- */
const G='#5f6368',sep=x=>B(x,358,2,40,'background:#dadce0'),tt=(x,w,t)=>T(x,387,w,t,25,{wt:500,c:'#4a4c50'});
const sub=(x,y,name)=>({x,y,w:0,h:`<ui-icon name="${name}" style="width:17px;height:10px;color:${G}"></ui-icon>`});
define('sheets-toolbar',`:host{height:80px;border-bottom:2px solid #dadce0;background:#fff}`,
 row(340,78,[I(71,372,33,15,'undo',G),I(128,372,33,15,'redo',G),I(184,366,32,28,'print',G),I(244,365,26,30,'paint',G),sep(292),tt(325,56,'100%'),I(408,376,15,8,'dn',G),sep(440),tt(471,14,'$'),tt(525,18,'%'),tt(573,20,'.0'),sub(588,390,'al'),tt(628,33,'.00'),sub(648,390,'ar'),tt(682,37,'123'),I(726,376,14,8,'dn',G),sep(759),T(793,387,49,'Arial',25,{wt:500,c:'#4a4c50'}),I(953,376,15,8,'dn',G),sep(987),tt(1020,25,'10'),I(1103,376,15,8,'dn',G),sep(1135),I(1160,377,26,6,'dots',G),I(1498,372,24,15,'chu',G)]));
define('formula-bar',`:host{height:48px;border-bottom:2px solid #c0c0c0;background:#fff}`,
 row(420,46,[T(16,452,46,'A60',25.5,{c:'#000'}),I(179,441,12,7,'dn','#777'),B(204,422,2,40,'background:#d5d5d5'),T(232,452,29,'fx',41,{f:'s',st:'italic',c:'#bdbdbd'}),B(288,427,2,34,'background:#cfcfcf'),T(309,452,111,'Counties',24,{f:'m',c:'#000'})]));

/* ---------- grid ---------- */
const COLS=[['A',92,202],['B',294,316],['C',610,202],['D',812,202],['E',1014,314],['F',1328,197]];
const DATA=[['Alameda',32],['Alpine',2],['Amador',13],['Butte',66],['Calaveras',22],['Colusa',6],['Contra Costa',27],['Del Norte',6],['El Dorado',37],['Fresno',57],['Glenn',8],['Humboldt',25],['Inyo',12],['Kern',62],['Kings',5],['Lake',49],['Lassen',36],['Los Angeles',46],['Madera',36],['Marin',6]];
define('sheet-grid',`
:host{height:944px;width:1546px;background:#fff;color:#000;font-size:26.67px;font-family:"Liberation Sans",sans-serif}
.head{display:flex;height:48px;border-bottom:2px solid #c0c0c0;background:#f8f9fa;overflow:hidden}
.head div{flex:none;height:46px;border-right:2px solid #c0c0c0;text-align:center;font:23px/48px Roboto;color:#5f6368}
.head .k{width:92px;border-right:9px solid #bdbdbd;border-bottom:8px solid #bdbdbd}
.head .s{background:#e8eaed}
.head .f{width:195px!important;padding-left:4px}
.body{display:flex;height:872px}
.rows{width:1523px;flex:none;overflow:hidden;height:872px}
.r{display:flex;height:42px}
.n{flex:none;width:92px;border-right:2px solid #c0c0c0;border-bottom:2px solid #c0c0c0;background:#f8f9fa;font:23px/37px Roboto;text-align:center;color:#5f6368}
.a{width:201px;flex:none;background:#f0f4f7;padding-left:6px;line-height:50px;white-space:nowrap;letter-spacing:-.32px}
.b{width:316px;flex:none;text-align:right;padding-right:7px;line-height:50px}
.r.h{height:42px}.r.h .n{background:#e8eaed}
.r.h .a{width:202px;height:44px;padding:0;border-bottom:2px solid #6882a3;background:#d9dfe8;line-height:36px;font-style:italic;position:relative}
.r.h .a i{display:block;width:200px;height:42px;border:3px solid #1a73e8;border-bottom-width:4px;padding-left:4px}
.r.h .a b{position:absolute;right:-4px;bottom:-4px;width:13px;height:14px;background:#1a73e8;border:2px solid #fff;border-right:0;border-bottom:0}
.r.h .b{height:44px;background:#6882a3;color:#fff;text-align:left;padding:0 0 0 6px;line-height:42px;white-space:nowrap}
.r.h .b span{letter-spacing:-.25px}
.v{width:23px;flex:none;border-left:2px solid #d9d9d9;height:872px;display:flex;flex-direction:column;align-items:center;background:#fff}
.v .th{width:18px;height:52px;border-radius:9px;background:#dadce0;margin:46px 0 708px;flex:none}
.v .ab{width:22px;height:33px;flex:none;border-top:2px solid #ddd;padding:12px 6px;color:#999}
.hs{height:24px;border-top:2px solid #d9d9d9;display:flex;background:#fff}
.hs .l{width:92px;border-right:2px solid #d0d0d0;background:#f8f8f8}
.hs .th{width:352px;height:18px;border-radius:9px;background:#dadce0;margin:2px 1010px 0 2px}
.hs .ab{width:33px;height:22px;border-left:2px solid #ddd;padding:5px 12px;color:#999}`,
 `<div class="head"><div class="k"></div>${COLS.map(([c,x,w])=>`<div class="${c==='A'?'s':c==='F'?'f':''}" style="width:${w}px">${c}</div>`).join('')}</div>
 <div class="body"><div class="rows"><div class="r h"><div class="n">60</div><div class="a"><i>Counties</i><b></b></div><div class="b"><span>COUNTA of ArchiveYear</span></div></div>
 ${DATA.map(([a,b],i)=>`<div class="r"><div class="n">${61+i}</div><div class="a">${a}</div><div class="b">${b}</div></div>`).join('')}</div>
 <div class="v"><div class="th"></div><div class="ab"><ui-icon name="up" style="width:10px;height:6px"></ui-icon></div><div class="ab"><ui-icon name="dn" style="width:10px;height:6px"></ui-icon></div></div></div>
 <div class="hs"><div class="l"></div><div class="th"></div><div class="ab"><ui-icon name="lf" style="width:6px;height:10px"></ui-icon></div><div class="ab"><ui-icon name="rt" style="width:6px;height:10px"></ui-icon></div></div>`);

/* ---------- pivot editor ---------- */
const st=(y,w,t)=>T(1583,y+1,w,t,28,{f:'i',wt:500,c:'#202124'});
const add=(y,label=true)=>B(1999,y,113,48,'border:2px solid #dadce0;border-radius:8px;background:#fff',label?row(y+2,44,[T(2027,y+35,54,'Add',28.5,{f:'i',wt:600,c:'#188038'})],'',2001):'');
const sel=(x,y,w,t,tw)=>B(x,y,w,52,'border:2px solid #dadce0;border-radius:8px;background:#fff',row(y+2,48,[T(x+18.5,y+34,tw,t,25,{c:'#3c4043'}),I(x+w-34,y+22,16,8,'dn',G)],'',x+2));
const card=(y,h,title,tw,l1,w1,l2,w2,s1,sw1,s2,sw2,extra)=>`<div style="margin-left:36px;width:527px;height:${h}px;background:#f1f3f4;border-radius:16px;flex:none">`
 +row(y,64,[T(1600,y+44,tw,title,28.5,{wt:500,c:'#3c4043'}),I(2067,y+24,20,20,'x',G)],'',1582)
 +row(y+64,42,[T(1604,y+94.5,w1,l1,24,{c:G}),T(1865,y+94.5,w2,l2,24,{c:G})],'',1582)
 +row(y+106,52,[sel(1600,y+106,229,s1,sw1),sel(1861,y+106,230,s2,sw2)],'',1582)+(extra||'')+`</div>`;
const FIELDS=[['AcresBurned',163],['Name',75],['Counties',112],['ArchiveYear',151],['Active',78],['AdminUnit',132],['AirTankers',136],['CalFireIncident',191],['CanonicalUrl',162],['ConditionStatem...',231],['ControlStatement',225],['CountyIds',127],['CrewsInvolved',184]];
define('pivot-editor',`:host{width:920px;height:1071px;background:#fff;box-shadow:0 0 22px #0000002b;position:relative;clip-path:inset(-30px 0 0 -40px)}
.main{display:flex;height:957px;overflow:hidden}.set{width:574px;height:957px;flex:none;display:flex;flex-direction:column;overflow:hidden}.sb{width:25px;flex:none}.set>*{flex:none}.fl{width:321px;border-left:2px solid #dadce0;display:flex;flex:none}.fields{width:295px;padding-left:1px;flex:none}`,
 row(340,112,[I(1584,382,36,28,'piv'),T(1651,406,253,'Pivot table editor',30,{f:'i',wt:500,c:'#202124'}),I(2400,387,22,22,'x',G)],'',1546)
 +`<div style="height:2px;background:#dadce0"></div><div class="main"><div class="set">`
 +row(454,62,[B(1578,468,503,2,'background:#dadce0')],'',1546)
 +row(516,84,[st(552,140,'Suggested'),I(2082,539,18,11,'chd',G)],'',1546)
 +row(600,96,[st(652,69,'Rows'),add(614)],'',1546)
 +card(696,232,'Counties',114,'Order',53,'Sort by',69,'Ascending',112,'Counties',93,row(854,60,[I(1602,872,36,36,'check'),T(1661,899.5,126,'Show totals',25,{c:G})],'',1582))
 +row(928,120,[st(1020,115,'Columns'),add(982)],'',1546)
 +row(1048,120,[st(1124,85,'Values'),add(1086)],'',1546)
 +card(1168,175,'ArchiveYear (COUNTA of A...',363,'Summarize by',139,'Show as',83,'COUNTA',92,'Default',75)
 +row(1343,68,[add(1398,false)],'',1546)
 +`</div><div class="sb"><div style="width:16px;height:758px;border-radius:8px;background:#dadce0;margin-top:62px"></div></div><div class="fl"><div class="fields">`
 +row(454,80,[I(2182,480,27,27,'search',G),T(2228,504,84,'Search',28.5,{c:'#a8a8a8'})],'',2148)
 +`<div style="height:2px;width:287px;background:#dadce0"></div>`
 +FIELDS.map(([t,w],i)=>row(548+i*68,68,[T(2172,592+i*68,w,t,28.5,{c:'#3c4043'})],i?'':'margin-top:12px',2148)).join('')
 +`</div><div style="width:16px;height:312px;border-radius:8px;background:#dadce0;margin:8px 0 0 1px"></div></div></div>`);

/* ---------- sheet tabs ---------- */
const sb=(x,w,t,ax)=>[T(x,1461.5,w,t,28.5,{f:'i',wt:600,c:'#80868b'}),I(ax,1448,16,8,'dn','#80868b')],sp=x=>B(x,1414,2,78,'background:#dcdee0');
define('sheet-tabs',`:host{height:80px;width:2466px;border-top:2px solid #e4e6e9;background:linear-gradient(#f1f3f4,#e6e7e9 50%,#d6d7d9)}`,
 row(1414,78,[I(101,1439,22,22,'plus','#616161'),I(161,1439,26,24,'list','#616161'),B(214,1414,12,78,'background:linear-gradient(90deg,#d2d5d3,#dfe1e0)'),...sb(243,94,'Sheet2',356),sp(404),...sb(438,92,'Sheet1',548),sp(596),...sb(629,437,'avg of acres burned per archive',1085),
 B(1134,1414,375,78,'background:linear-gradient(#fff,#f5f5f5 50%,#e6e6e6);box-shadow:0 0 4px #0003',row(1414,77,[T(1167,1461.5,273,'#of fires per county',28.5,{f:'i',wt:600,c:'#188038'}),I(1460,1448,16,8,'dn','#188038')],'',1134)),
 ...sb(1542,187,'Fires per year',1749),sp(1797),I(1830,1439,12,22,'lf','#5c5c5c'),I(1893,1439,11,22,'rt','#b4b4b4'),I(2389,1433,36,42,'expl')]));
define('side-rail',`:host{width:94px;height:1152px;background:radial-gradient(circle at 0% 100%,#e2e2e2,#fff 90px);border-left:2px solid #dadce0}`,
 row(340,112,[I(2505,377,37,38,'cal')],'',2468)+row(452,112,[I(2505,489,38,38,'keep')],'',2468)+row(564,112,[I(2505,601,38,38,'task')],'',2468)+row(676,80,[B(2503,708,40,2,'background:#dadce0')],'',2468)+row(756,600,[I(2512,786,24,24,'plust',G)],'',2468)+row(1356,100,[I(2517,1426,12,20,'chr',G)],'',2468));

/* ---------- dock ---------- */
const D=[['finder',73,58,1],['shot',149,58],['siriapp',225,58],['lpad',301,58],['safari',379,58,1],['cale',455,58,0,'1'],['notes',531,58,1],['photos',607,58],['ftime',683,58,0,'3'],['msgs',759,58],['nums',835,58],['rem',911,58],['books',987,58],['prev',1065,60,1,0,1511,61],['appst',1141,58],['ps',1212,68,0,0,1505,66],['ai',1288,68,0,0,1505,66],['pr',1368,60],['prefs',1445,58,0,'1'],['word',1521,58,1],['chrome',1597,58,1],['spot',1670,64,1,0,1508,64],['tedit',1751,60],['stick',1827,58],['pod',1903,58],['zoom',1976,64,1,0,1508,64],['|',2064,2],['mail',2089,58],['music',2165,58],['acro',2240,59,1],['|',2326,2],['csv',2352,60,0,0,1505,62],['trash',2432,52,0,0,1505,67]];
define('mac-dock',`:host{height:108px;padding:4px 0 0 58px;background:radial-gradient(ellipse at 30% 100%,#3a0a0d88,transparent 30%),radial-gradient(ellipse at 52% 100%,#5a0c14aa,transparent 14%),radial-gradient(ellipse at 80% 100%,#3c2216aa,transparent 12%),linear-gradient(90deg,#1a090b,#120b10 20%,#150a0c 60%,#14131b)}
.d{width:2443px;height:94px;border:2px solid #4a4444;border-radius:24px;background:linear-gradient(90deg,#2b1c1e,#241d1b 35%,#2f1e20 52%,#241f1c 62%,#1f1e24 72%,#24232d)}
.i{position:relative;height:88px}.dt{position:absolute;top:80px;width:8px;height:8px;border-radius:50%;background:#a89f9f}
.bg{position:absolute;top:5px;right:-8px;width:27px;height:27px;border-radius:50%;background:#f23b3a;color:#fff;font:17px/27px Inter;text-align:center}`,
 `<div class="d">`+row(1498,90,D.map(([n,x,w,run,bg,y=1511,h=58])=>n==='|'?B(x,1508,2,70,'background:#56545a'):{x,y:1498,w,h:`<div class="i" style="width:${w}px;padding-top:${y-1498}px"><ui-icon name="${n}" style="width:${w}px;height:${h}px"></ui-icon>${run?`<span class="dt" style="left:${w/2-4}px"></span>`:''}${bg?`<span class="bg">${bg}</span>`:''}</div>`}),'',60)+`</div>`);

/* ---------- desktop ---------- */
define('mac-desktop',`:host{width:2560px;height:1600px;overflow:hidden;background:#0a0708}
.top{background:linear-gradient(#2c3353 50%,#120709 50%)}.win{border-radius:20px 20px 22px 22px;overflow:hidden;height:1443px;background:linear-gradient(#363636 50%,#fff 50%)}
.m{display:flex}.l{width:2466px;flex:none}.g{display:flex;height:1072px}.gl{width:1546px;flex:none}`,
 `<div class="top"><mac-menubar></mac-menubar><div class="win"><safari-toolbar></safari-toolbar><safari-tabs></safari-tabs><sheets-header></sheets-header><div class="m"><div class="l"><div class="g"><div class="gl"><sheets-toolbar></sheets-toolbar><formula-bar></formula-bar><sheet-grid></sheet-grid></div><pivot-editor></pivot-editor></div><sheet-tabs></sheet-tabs></div><side-rail></side-rail></div></div></div><mac-dock></mac-dock>`);
</script>
</body>
</html>
